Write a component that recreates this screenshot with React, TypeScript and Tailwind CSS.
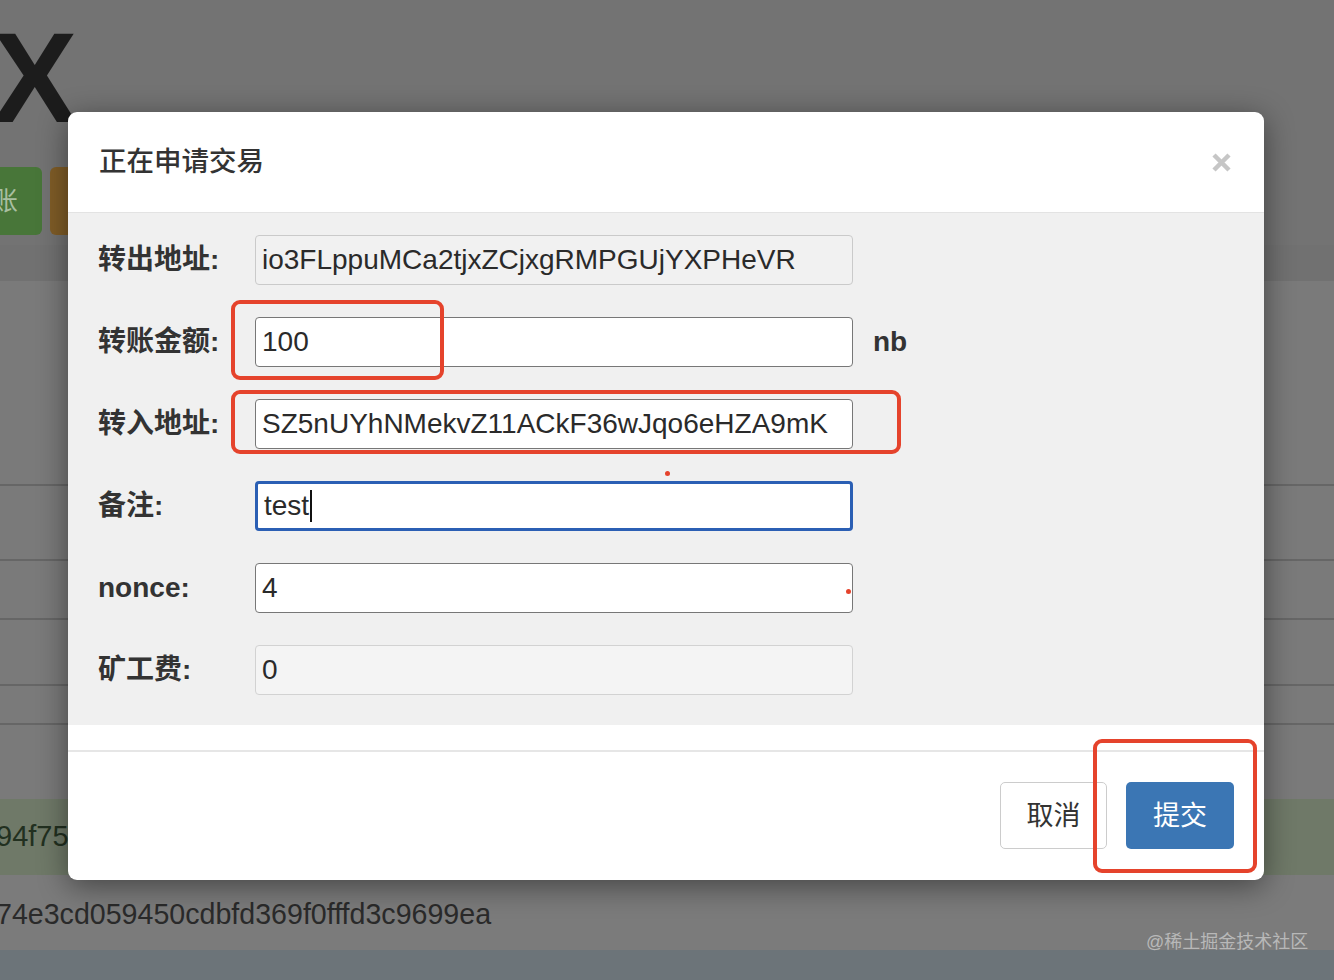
import React from "react";

const FONT = { fontFamily: '"Liberation Sans", "Noto Sans CJK SC", sans-serif' };

function Field({
  label,
  value,
  variant,
  suffix,
  cursor,
}: {
  label: string;
  value: string;
  variant: "readonly" | "normal" | "focus" | "disabled";
  suffix?: string;
  cursor?: boolean;
}) {
  const box =
    variant === "readonly"
      ? "border border-[#cacaca] bg-[#f1f1f1]"
      : variant === "disabled"
      ? "border border-[#d2d2d2] bg-[#f4f4f4]"
      : variant === "focus"
      ? "border-[3px] border-[#2b5fb4] bg-white pl-[4px]"
      : "border border-[#777777] bg-white";
  return (
    <div className="flex items-center h-[50px]">
      <div className="w-[157px] text-[28px] font-bold text-[#333] leading-none">{label}</div>
      <div className={`w-[598px] h-[50px] rounded-[4px] flex items-center pl-[6px] text-[28px] text-[#2a2a2a] ${box}`}>
        <span className="leading-none">{value}</span>
        {cursor && <span className="inline-block w-[2px] h-[32px] bg-[#111] ml-[1px]" />}
      </div>
      {suffix && <div className="ml-[20px] text-[28px] font-bold text-[#333]">{suffix}</div>}
    </div>
  );
}

export default function App() {
  return (
    <div className="relative w-[1334px] h-[980px] overflow-hidden bg-[#737373]" style={FONT}>
      {/* Background page (dimmed) */}
      <div className="flex flex-col w-full h-full">
        <div className="h-[160px] pt-[14px]">
          <div className="ml-[-8px] text-[128px] font-bold leading-none text-[#1c1c1c]">X</div>
        </div>
        <div className="h-[85px] flex items-start gap-[8px] pt-[7px]">
          <div className="ml-[-58px] w-[100px] h-[68px] rounded-[6px] bg-[#487639] flex items-center justify-end pr-[24px] text-[26px] text-[#a9bfa1]">
            转账
          </div>
          <div className="w-[100px] h-[68px] rounded-[6px] bg-[#805d27]" />
        </div>
        <div className="h-[36px] bg-[#717171]" />
        <div className="h-[205px] bg-[#7a7a7a] border-b-2 border-[#666]" />
        <div className="h-[75px] bg-[#7a7a7a] border-b-2 border-[#666]" />
        <div className="h-[59px] bg-[#7a7a7a] border-b-2 border-[#666]" />
        <div className="h-[66px] bg-[#7a7a7a] border-b-2 border-[#666]" />
        <div className="h-[39px] bg-[#7a7a7a] border-b-2 border-[#666]" />
        <div className="h-[74px] bg-[#7a7a7a]" />
        <div className="h-[76px] bg-[#6f7968] flex items-center text-[29px] text-[#223020] ml-[-4px]">94f7584</div>
        <div className="h-[75px] bg-[#7b7b7b] flex items-center pt-[4px] text-[28.6px] text-[#2a2a2a] ml-[-4px] relative">
          74e3cd059450cdbfd369f0fffd3c9699ea
        </div>
        <div className="flex-1 bg-[#6c7479]" />
      </div>

      {/* watermark */}
      <div className="absolute left-[1146px] top-[933px] text-[18px] text-[#b8b8b8] leading-none">@稀土掘金技术社区</div>

      {/* Modal */}
      <div className="absolute left-[68px] top-[112px] w-[1196px] h-[768px] rounded-[9px] bg-white overflow-hidden shadow-[0_6px_30px_rgba(0,0,0,0.45)] flex flex-col">
        <div className="h-[101px] flex items-center justify-between pl-[31px] pr-[32px] border-b border-[#e3e3e3]">
          <div className="text-[27.5px] font-medium text-[#333] leading-none">正在申请交易</div>
          <svg width="21" height="21" viewBox="0 0 21 21" className="mt-[1px]">
            <path d="M3 3 L18 18 M18 3 L3 18" stroke="#c6c6c6" strokeWidth="4.5" strokeLinecap="butt" />
          </svg>
        </div>
        <div className="bg-[#f0f0f0] h-[512px] pt-[22px] pl-[30px] flex flex-col gap-[32px]">
          <Field label="转出地址:" value="io3FLppuMCa2tjxZCjxgRMPGUjYXPHeVR" variant="readonly" />
          <Field label="转账金额:" value="100" variant="normal" suffix="nb" />
          <Field label="转入地址:" value="SZ5nUYhNMekvZ11ACkF36wJqo6eHZA9mK" variant="normal" />
          <Field label="备注:" value="test" variant="focus" cursor />
          <Field label="nonce:" value="4" variant="normal" />
          <Field label="矿工费:" value="0" variant="disabled" />
        </div>
        <div className="h-[25px] bg-white" />
        <div className="flex-1 border-t-2 border-[#e6e6e6] flex items-start justify-end pr-[30px] pt-[30px] gap-[19px]">
          <div className="w-[107px] h-[67px] rounded-[5px] border border-[#cccccc] bg-white flex items-center justify-center pt-[2px] text-[27px] text-[#333]">
            取消
          </div>
          <div className="w-[108px] h-[67px] rounded-[5px] bg-[#3b76b4] flex items-center justify-center pt-[2px] text-[27px] text-white">
            提交
          </div>
        </div>

        {/* annotations */}
        <div className="absolute left-[163px] top-[188px] w-[213px] h-[80px] border-4 border-[#e5432c] rounded-[9px]" />
        <div className="absolute left-[163px] top-[278px] w-[670px] h-[64px] border-4 border-[#e5432c] rounded-[9px]" />
        <div className="absolute left-[1025px] top-[627px] w-[164px] h-[134px] border-4 border-[#e5432c] rounded-[9px]" />
        <div className="absolute left-[597px] top-[359px] w-[5px] h-[5px] rounded-full bg-[#e5432c]" />
        <div className="absolute left-[778px] top-[477px] w-[5px] h-[5px] rounded-full bg-[#e5432c]" />
      </div>
    </div>
  );
}
